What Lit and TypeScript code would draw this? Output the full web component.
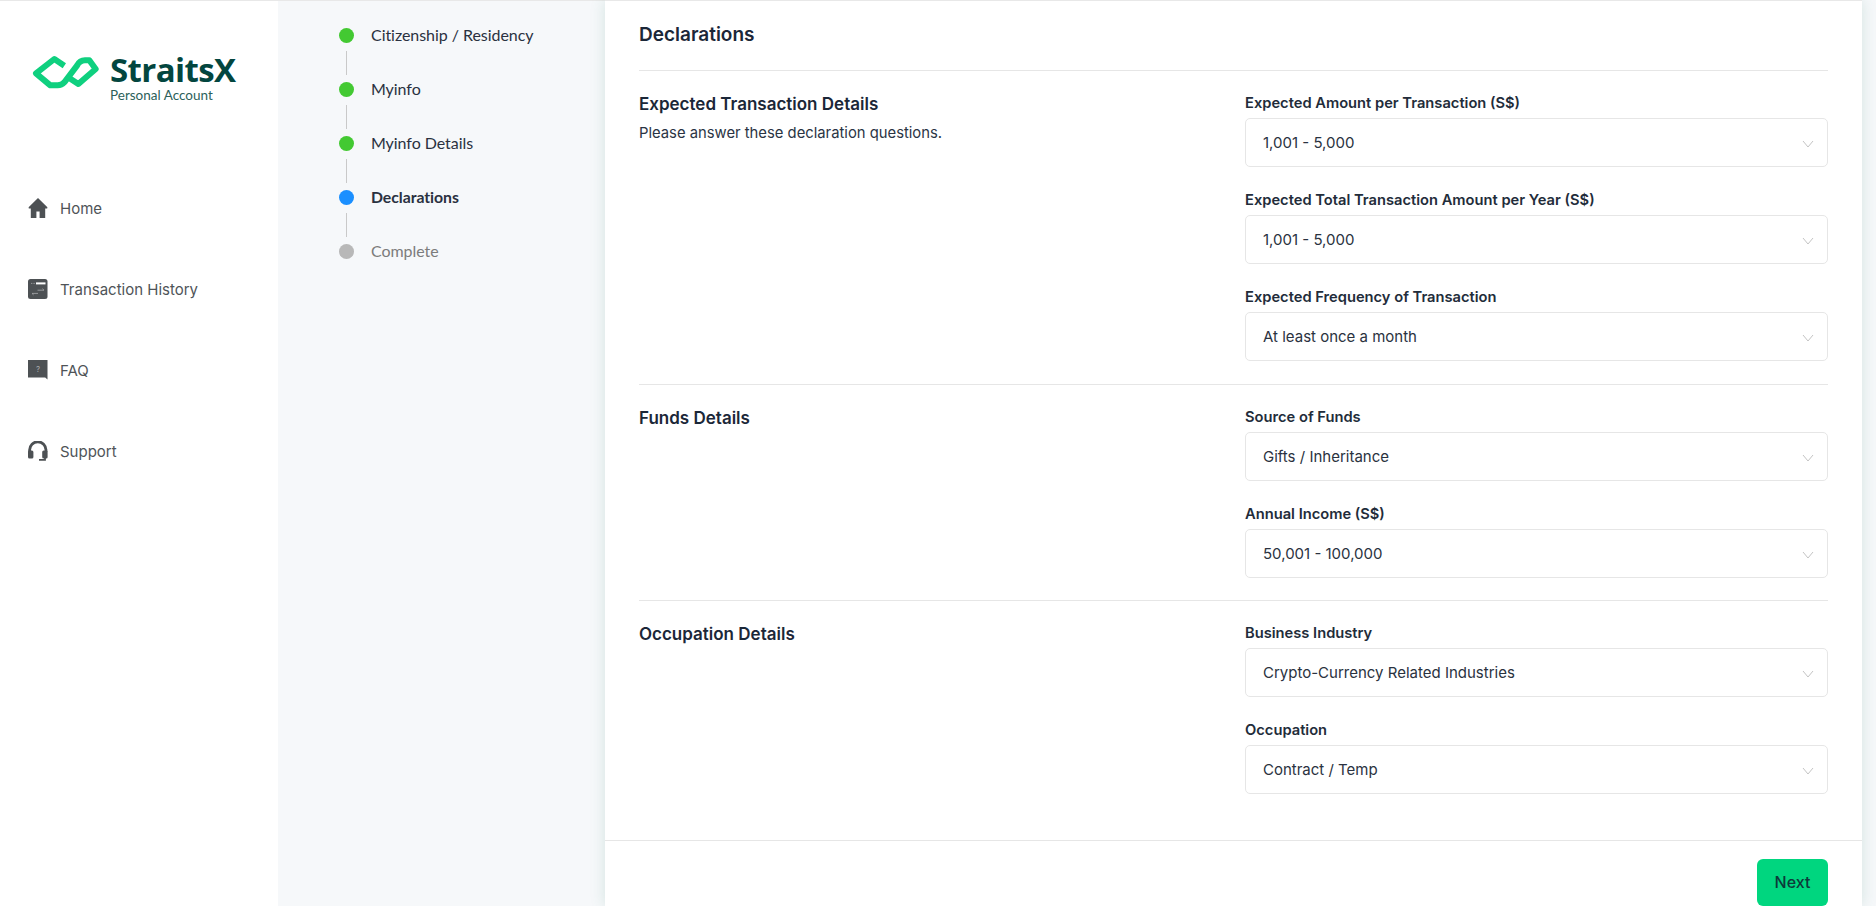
import { LitElement, html, css, svg } from "lit";
import { customElement } from "lit/decorators.js";

const chev = html`<svg class="chev" width="12" height="8" viewBox="0 0 12 8"><path d="M1 1l5 6 5-6" fill="none" stroke="#c4c4c4" stroke-width="1"/></svg>`;

const icons: Record<string, unknown> = {
  home: svg`<path d="M10 0 0.6 9.2 0.8 10.6H2.8V20H8.4V13.4H11.6V20H17.2V10.6H19.2L19.4 9.2Z" fill="#4d5154"/>`,
  tx: svg`<rect x="0" y="0" width="19.5" height="20" rx="2.5" fill="#4d5154"/><rect x="8" y="3.4" width="9.5" height="2" fill="#fff"/><path d="M3 4.4h1.4M5.4 4.4h1.4M9.5 11.2h6.5l-1.6-1.5M10 14.4H4l1.6 1.5" stroke="#a8aaac" stroke-width="0.8" fill="none"/>`,
  faq: svg`<path d="M0 0H19.5V19.5L17.2 17.5H0Z" fill="#4d5154"/><text x="10" y="12" font-size="8" font-family="Inter" fill="#a8aaac" text-anchor="middle">?</text>`,
  sup: svg`<path d="M1.6 11V9a8.2 8.2 0 0 1 16.4 0v2" fill="none" stroke="#4d5154" stroke-width="2.8"/><rect x="0" y="9.5" width="5.4" height="8" rx="1.5" fill="#4d5154"/><rect x="14.2" y="9.5" width="5.4" height="8" rx="1.5" fill="#4d5154"/><path d="M17 16.5v2.4h-6" fill="none" stroke="#4d5154" stroke-width="1.8"/>`,
};

const nav = [["home", "Home"], ["tx", "Transaction History"], ["faq", "FAQ"], ["sup", "Support"]];
const steps = [
  ["Citizenship / Residency", "done"],
  ["Myinfo", "done"],
  ["Myinfo Details", "done"],
  ["Declarations", "now"],
  ["Complete", "todo"],
];
const sections: { title: string; sub?: string; cls: string; fields: [string, string][] }[] = [
  {
    title: "Expected Transaction Details",
    sub: "Please answer these declaration questions.",
    cls: "s1",
    fields: [
      ["Expected Amount per Transaction (S$)", "1,001 - 5,000"],
      ["Expected Total Transaction Amount per Year (S$)", "1,001 - 5,000"],
      ["Expected Frequency of Transaction", "At least once a month"],
    ],
  },
  {
    title: "Funds Details",
    cls: "s2",
    fields: [
      ["Source of Funds", "Gifts / Inheritance"],
      ["Annual Income (S$)", "50,001 - 100,000"],
    ],
  },
  {
    title: "Occupation Details",
    cls: "s3",
    fields: [
      ["Business Industry", "Crypto-Currency Related Industries"],
      ["Occupation", "Contract / Temp"],
    ],
  },
];

@customElement("app-root")
export class AppRoot extends LitElement {
  static styles = css`
    :host { display: block; height: 906px; overflow: hidden; background: #f6f8fa; font-family: Inter, "Liberation Sans", sans-serif; color: #1f2a3a; }
    .page { display: flex; height: 906px; }
    .side { width: 278px; flex: none; background: #fff; border-top: 1px solid #e8e8e8; box-sizing: border-box; }
    .logo { display: flex; margin: 44px 0 0 25px; height: 50px; }
    .brand { display: flex; flex-direction: column; margin-left: 1px; }
    .brand b { font: 700 33px/33px "Open Sans", sans-serif; letter-spacing: -0.6px; color: #03463f; margin-top: 8px; }
    .brand span { font: 400 13.5px/14px Lato, sans-serif; color: #2c5f5a; margin: 2px 0 0 0; white-space: nowrap; }
    nav { margin-top: 103px; display: flex; flex-direction: column; gap: 61px; padding-left: 28px; }
    .ni { display: flex; align-items: center; gap: 12px; height: 20px; font-size: 15px; color: #4f5458; }
    .steps { width: 327px; flex: none; border-top: 1px solid #e8e8e8; box-sizing: border-box; padding: 20px 0 0 61px; }
    .step { display: flex; align-items: center; height: 28px; font: 400 16px/28px Lato, sans-serif; letter-spacing: -0.05px; color: #2a3140; }
    .dot { width: 15px; height: 15px; border-radius: 50%; margin-right: 17px; flex: none; }
    .done .dot { background: #43c932; }
    .now .dot { background: #1a8fff; }
    .now { font-weight: 700; font-size: 15.8px; }
    .todo .dot { background: #b8b8b8; }
    .todo { color: #7c7c7c; }
    .line { width: 1px; height: 24px; background: #c9c9c9; margin: 2px 0 0 7px; }
    main { width: 1257px; flex: none; background: #fff; box-shadow: 0 0 14px rgba(60,140,110,.18); border-top: 1px solid #e8e8e8; box-sizing: border-box; display: flex; flex-direction: column; position: relative; }
    .head { margin: 0 34px; height: 70px; border-bottom: 1px solid #e6e6e6; box-sizing: border-box; padding-top: 23px; font-weight: 600; font-size: 19px; line-height: 22px; color: #1b2738; }
    .sec { margin: 0 34px; display: flex; border-bottom: 1px solid #e6e6e6; box-sizing: border-box; }
    .s1 { height: 314px; }
    .s2 { height: 217px; }
    .s3 { border-bottom: 0; height: 239px; }
    .left { width: 606px; flex: none; padding-top: 23px; }
    .left h2 { margin: 0; font-size: 17px; line-height: 20px; font-weight: 600; color: #1b2738; }
    .left p { margin: 10px 0 0; font-size: 14.8px; line-height: 18px; color: #2a3444; }
    .right { flex: 1; padding-top: 23px; display: flex; flex-direction: column; gap: 24px; }
    label { display: block; font-size: 14.7px; font-weight: 600; line-height: 18px; color: #222c3a; margin-bottom: 6px; white-space: nowrap; }
    .sel { height: 49px; border: 1px solid #e6e6e6; border-radius: 5px; box-sizing: border-box; display: flex; align-items: center; justify-content: space-between; padding: 0 13px 0 17px; font-size: 15px; color: #2a3240; }
    .chev { margin-top: 3px; }
    .foot { border-top: 1px solid #e6e6e6; flex: 1; display: flex; justify-content: flex-end; padding: 18px 34px 0 0; }
    button { width: 71px; height: 47px; border: 0; border-radius: 6px; background: #00d67f; color: #0d3a3a; font: 500 16px Inter, sans-serif; padding: 0; }
  `;

  render() {
    return html`<div class="page">
      <aside class="side">
        <div class="logo">
          <svg width="84" height="50" viewBox="0 0 252 150">
            <path d="M118 62 L88 42 L33 85 L76 121 L98 121 Q110 121 118 112 L156 62 Q164 46 180 46 L193 46 L212 72 L160 117 L128 96" fill="none" stroke="#0fd07f" stroke-width="18" stroke-linejoin="round"/>
          </svg>
          <div class="brand"><b>StraitsX</b><span>Personal Account</span></div>
        </div>
        <nav>
          ${nav.map(([k, t]) => html`<div class="ni"><svg width="20" height="20" viewBox="0 0 20 20">${icons[k]}</svg>${t}</div>`)}
        </nav>
      </aside>
      <div class="steps">
        ${steps.map(([t, c], i) => html`${i ? html`<div class="line"></div>` : ""}<div class="step ${c}"><span class="dot"></span>${t}</div>`)}
      </div>
      <main>
        <div class="head">Declarations</div>
        ${sections.map((s) => html`<section class="sec ${s.cls}">
          <div class="left"><h2>${s.title}</h2>${s.sub ? html`<p>${s.sub}</p>` : ""}</div>
          <div class="right">
            ${s.fields.map(([l, v]) => html`<div><label>${l}</label><div class="sel">${v}${chev}</div></div>`)}
          </div>
        </section>`)}
        <div class="foot"><button>Next</button></div>
      </main>
    </div>`;
  }
}
